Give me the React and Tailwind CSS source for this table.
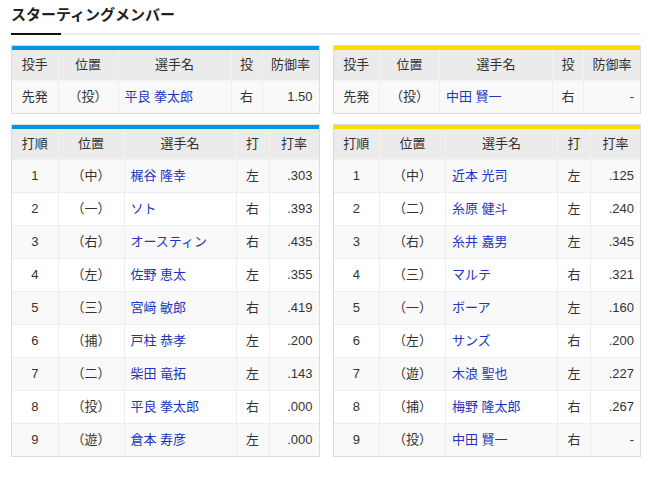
const font = { fontFamily: '"Liberation Sans", "Noto Sans CJK JP", sans-serif' };

const topLeft = { name: "平良 拳太郎", hand: "右", era: "1.50" };
const topRight = { name: "中田 賢一", hand: "右", era: "-" };

const lineupLeft = [
  ["1", "（中）", "梶谷 隆幸", "左", ".303"],
  ["2", "（一）", "ソト", "右", ".393"],
  ["3", "（右）", "オースティン", "右", ".435"],
  ["4", "（左）", "佐野 恵太", "左", ".355"],
  ["5", "（三）", "宮﨑 敏郎", "右", ".419"],
  ["6", "（捕）", "戸柱 恭孝", "左", ".200"],
  ["7", "（二）", "柴田 竜拓", "左", ".143"],
  ["8", "（投）", "平良 拳太郎", "右", ".000"],
  ["9", "（遊）", "倉本 寿彦", "左", ".000"],
];

const lineupRight = [
  ["1", "（中）", "近本 光司", "左", ".125"],
  ["2", "（二）", "糸原 健斗", "左", ".240"],
  ["3", "（右）", "糸井 嘉男", "左", ".345"],
  ["4", "（三）", "マルテ", "右", ".321"],
  ["5", "（一）", "ボーア", "左", ".160"],
  ["6", "（左）", "サンズ", "右", ".200"],
  ["7", "（遊）", "木浪 聖也", "左", ".227"],
  ["8", "（捕）", "梅野 隆太郎", "右", ".267"],
  ["9", "（投）", "中田 賢一", "右", "-"],
];

const Th = ({ children }) => (
  <th className="h-[30px] border border-[#f2f2f2] bg-[#ebebeb] text-center font-normal text-[13px] text-[#333]">
    {children}
  </th>
);

const Td = ({ children, align = "center", link }) => (
  <td
    className={`h-[33px] border border-[#ededed] px-[6px] text-[13px] ${
      align === "left" ? "text-left" : align === "right" ? "text-right" : "text-center"
    } ${link ? "text-[#1e35c0]" : "text-[#333]"}`}
  >
    {children}
  </td>
);

const Frame = ({ color, children }) => (
  <div className="border border-[#dcdcdc]">
    <div className={`h-[4px] ${color}`} />
    {children}
  </div>
);

const PitcherTable = ({ color, p }) => (
  <Frame color={color}>
    <table className="w-full table-fixed border-collapse border-hidden">
      <colgroup>
        <col className="w-[46px]" />
        <col className="w-[60px]" />
        <col className="w-[113px]" />
        <col className="w-[31px]" />
        <col />
      </colgroup>
      <thead>
        <tr>
          <Th>投手</Th>
          <Th>位置</Th>
          <Th>選手名</Th>
          <Th>投</Th>
          <Th>防御率</Th>
        </tr>
      </thead>
      <tbody>
        <tr className="bg-[#f9f9f9]">
          <Td>先発</Td>
          <Td>（投）</Td>
          <Td align="left" link>
            {p.name}
          </Td>
          <Td>{p.hand}</Td>
          <Td align="right">{p.era}</Td>
        </tr>
      </tbody>
    </table>
  </Frame>
);

const LineupTable = ({ color, rows }) => (
  <Frame color={color}>
    <table className="w-full table-fixed border-collapse border-hidden">
      <colgroup>
        <col className="w-[46px]" />
        <col className="w-[66px]" />
        <col className="w-[112px]" />
        <col className="w-[33px]" />
        <col />
      </colgroup>
      <thead>
        <tr>
          <Th>打順</Th>
          <Th>位置</Th>
          <Th>選手名</Th>
          <Th>打</Th>
          <Th>打率</Th>
        </tr>
      </thead>
      <tbody>
        {rows.map((r, i) => (
          <tr key={r[0]} className={i % 2 === 0 ? "bg-[#f9f9f9]" : "bg-white"}>
            <Td>{r[0]}</Td>
            <Td>{r[1]}</Td>
            <Td align="left" link>
              {r[2]}
            </Td>
            <Td>{r[3]}</Td>
            <Td align="right">{r[4]}</Td>
          </tr>
        ))}
      </tbody>
    </table>
  </Frame>
);

export default function App() {
  return (
    <div className="min-h-[480px] bg-white" style={font}>
      <div className="w-[630px] ml-[11px] pt-[5px]">
        <h2 className="text-[15px] leading-[20px] font-bold text-[#222]">
          スターティングメンバー
        </h2>
        <div className="flex mt-[8px]">
          <div className="w-[50px] h-[2px] bg-[#111]" />
          <div className="flex-1 h-[2px] bg-[#eeeeee]" />
        </div>
        <div className="grid grid-cols-2 gap-x-[13px] gap-y-[10px] mt-[10px]">
          <PitcherTable color="bg-[#0096df]" p={topLeft} />
          <PitcherTable color="bg-[#ffdb00]" p={topRight} />
          <LineupTable color="bg-[#0096df]" rows={lineupLeft} />
          <LineupTable color="bg-[#ffdb00]" rows={lineupRight} />
        </div>
      </div>
    </div>
  );
}
